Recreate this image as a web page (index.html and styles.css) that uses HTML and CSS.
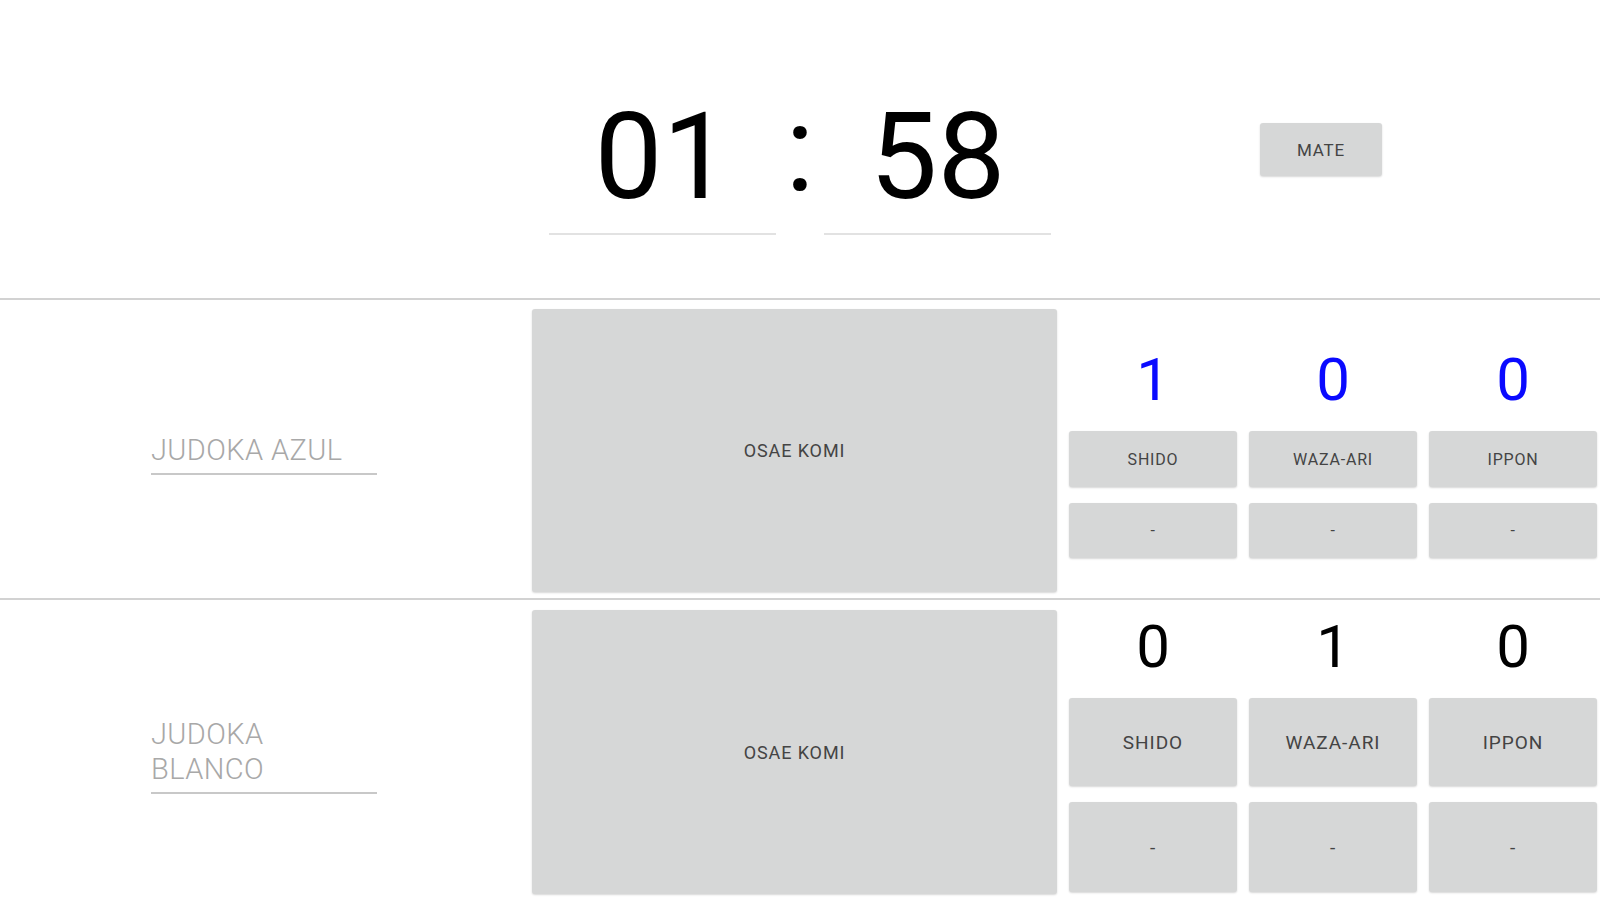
FILE: index.html
```html
<!DOCTYPE html>
<html lang="es">
<head>
<meta charset="utf-8">
<title>Judo Scoreboard</title>
<link rel="stylesheet" href="styles.css">
</head>
<body>
<div class="screen">
  <header class="top">
    <div class="spacer"></div>
    <div class="timer">
      <div class="time-field">01</div>
      <div class="colon">:</div>
      <div class="time-field">58</div>
    </div>
    <div class="top-actions">
      <button class="btn btn-mate">MATE</button>
    </div>
  </header>
  <div class="divider"></div>
  <section class="row row-blue">
    <div class="name-col">
      <div class="name-field">JUDOKA AZUL</div>
    </div>
    <button class="btn osae">OSAE KOMI</button>
    <div class="scores">
      <div class="score score-blue">1</div>
      <div class="score score-blue">0</div>
      <div class="score score-blue">0</div>
      <button class="btn score-btn">SHIDO</button>
      <button class="btn score-btn">WAZA-ARI</button>
      <button class="btn score-btn">IPPON</button>
      <button class="btn score-btn">-</button>
      <button class="btn score-btn">-</button>
      <button class="btn score-btn">-</button>
    </div>
  </section>
  <div class="divider"></div>
  <section class="row row-white">
    <div class="name-col">
      <div class="name-field">JUDOKA BLANCO</div>
    </div>
    <button class="btn osae">OSAE KOMI</button>
    <div class="scores">
      <div class="score">0</div>
      <div class="score">1</div>
      <div class="score">0</div>
      <button class="btn score-btn">SHIDO</button>
      <button class="btn score-btn">WAZA-ARI</button>
      <button class="btn score-btn">IPPON</button>
      <button class="btn score-btn">-</button>
      <button class="btn score-btn">-</button>
      <button class="btn score-btn">-</button>
    </div>
  </section>
</div>
</body>
</html>
```

FILE: styles.css
```css
* { box-sizing: border-box; }
html, body {
  margin: 0;
  padding: 0;
  background: #ffffff;
}
body {
  font-family: Roboto, "Noto Sans", "Liberation Sans", sans-serif;
  color: #000;
}
.screen {
  width: 1600px;
  height: 900px;
  overflow: hidden;
}

/* Top timer section */
.top {
  height: 298px;
  display: grid;
  grid-template-columns: 1fr auto 1fr;
  align-items: start;
}
.timer {
  display: flex;
  align-items: flex-start;
}
.time-field {
  width: 227px;
  margin-top: 84px;
  font-size: 121px;
  line-height: 147px;
  padding-bottom: 2px;
  border-bottom: 2px solid #e2e2e2;
  text-align: center;
  color: #000;
}
.colon {
  width: 48px;
  margin-top: 76px;
  font-size: 121px;
  line-height: 147px;
  text-align: center;
}
.top-actions {
  display: flex;
  align-items: flex-start;
}

/* Buttons */
.btn {
  border: none;
  margin: 0;
  padding: 0;
  background: #d6d7d7;
  border-radius: 3px;
  box-shadow: 0 1px 2px rgba(0, 0, 0, 0.16);
  font-family: Roboto, "Noto Sans", "Liberation Sans", sans-serif;
  color: #444444;
  letter-spacing: 0.05em;
  text-transform: uppercase;
  cursor: pointer;
}
.btn-mate {
  margin-left: 209px;
  margin-top: 123px;
  width: 122px;
  height: 53px;
  font-size: 17px;
}

.divider {
  height: 2px;
  background: #d2d2d2;
}

/* Rows */
.row {
  display: flex;
  align-items: flex-start;
}
.row-blue { height: 298px; }
.row-white { height: 300px; }

.name-col {
  width: 532px;
  align-self: stretch;
  display: flex;
  align-items: center;
  padding-left: 151px;
  padding-top: 10px;
}
.name-field {
  width: 226px;
  padding-right: 10px;
  padding-bottom: 5px;
  border-bottom: 2px solid #c8c8c8;
  font-size: 29px;
  font-weight: 300;
  letter-spacing: 0.4px;
  line-height: 35px;
  color: #a8a8a8;
}

.osae {
  width: 525px;
  font-size: 18px;
}
.row-blue .osae { margin-top: 9px; height: 283px; }
.row-white .osae { margin-top: 10px; height: 284px; }

.scores {
  margin-left: 12px;
  width: 528px;
  display: grid;
  grid-template-columns: repeat(3, 1fr);
  column-gap: 12px;
  row-gap: 16px;
}
.row-blue .scores {
  padding-top: 45px;
  grid-template-rows: 70px 56px 55px;
}
.row-white .scores {
  padding-top: 12px;
  grid-template-rows: 70px 88px 90px;
}
.score {
  font-size: 60px;
  line-height: 70px;
  text-align: center;
  color: #000;
}
.score-blue { color: #0a0aff; }
.row-blue .score-btn { font-size: 16px; }
.row-white .score-btn { font-size: 19px; }
```
